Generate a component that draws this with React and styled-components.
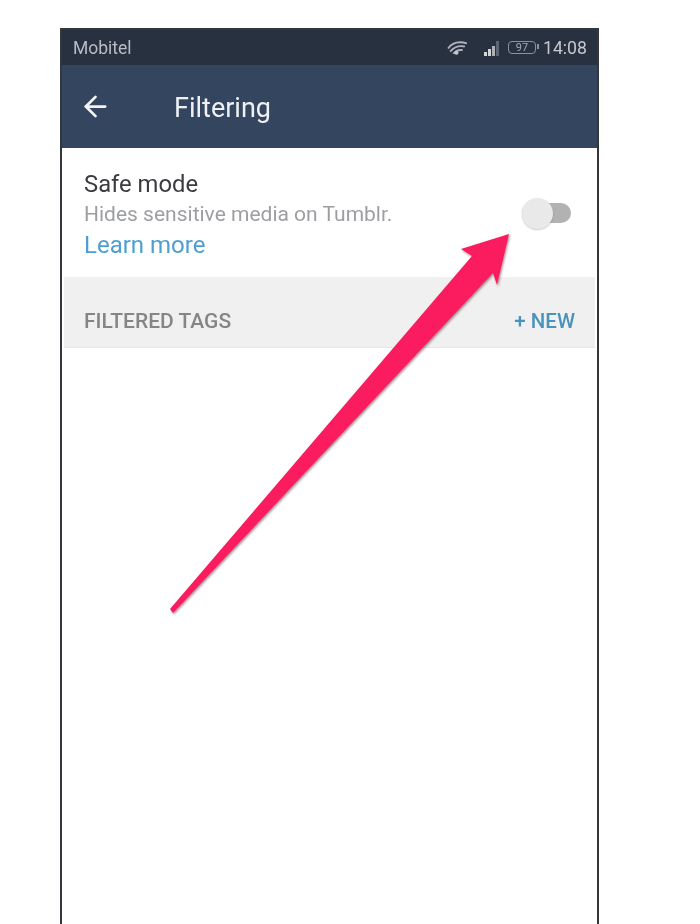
import React from 'react'
import styled, { createGlobalStyle } from 'styled-components'
import { ArrowLeft } from 'lucide-react'

const GlobalStyle = createGlobalStyle`
  html, body {
    margin: 0;
    padding: 0;
    background: #fff;
    font-family: Roboto, "Liberation Sans", sans-serif;
  }
`

function WifiIcon() {
  return (
    <svg width="21" height="15" viewBox="0 0 20 14" fill="none" stroke="#aeb3ba" strokeWidth="1.8">
      <path d="M1 8 C5 2 12 1 19 3" />
      <path d="M3 11 C7 6 12 5 17 6" />
      <path d="M6 13 C9 9 12 9 15 9.5" />
      <circle cx="9" cy="12" r="2" fill="#c4c8cc" stroke="none" />
    </svg>
  )
}

function SignalIcon() {
  return (
    <SignalSvg width="19" height="16" viewBox="0 0 17 16">
      <path d="M1 12h3v4H1zM5 9h3v7H5z" fill="#d4d6d9" />
      <path d="M9 6h3v10H9z" fill="#aeb2b7" />
      <path d="M13 1h3v15h-3z" fill="#5b6574" />
    </SignalSvg>
  )
}

function Battery() {
  return (
    <BatteryBody>
      <span>97</span>
    </BatteryBody>
  )
}

function PinkArrow() {
  return (
    <ArrowSvg width="360" height="400" viewBox="160 225 360 400">
      <defs>
        <filter id="arrowShadow" x="-5%" y="-5%" width="110%" height="110%">
          <feDropShadow dx="1" dy="1.5" stdDeviation="1.2" floodColor="#5a3040" floodOpacity="0.55" />
        </filter>
      </defs>
      <path
        d="M509 234 L461 249 L472 256 L170 609 L173 613 L493 273 L497 285 Z"
        fill="#fa1a5e"
        filter="url(#arrowShadow)"
      />
    </ArrowSvg>
  )
}

export default function App() {
  return (
    <Page>
      <GlobalStyle />
      <Phone>
        <StatusBar>
          <Carrier>Mobitel</Carrier>
          <StatusIcons>
            <WifiIcon />
            <SignalIcon />
            <Battery />
            <Clock>14:08</Clock>
          </StatusIcons>
        </StatusBar>
        <AppBar>
          <BackIcon size={33} strokeWidth={2} color="#f2f4f6" />
          <Title>Filtering</Title>
        </AppBar>
        <SafeRow>
          <SafeText>
            <SafeTitle>Safe mode</SafeTitle>
            <SafeHint>Hides sensitive media on Tumblr.</SafeHint>
            <LearnMore>Learn more</LearnMore>
          </SafeText>
          <Toggle>
            <Knob />
          </Toggle>
        </SafeRow>
        <TagsBar>
          <TagsLabel>FILTERED TAGS</TagsLabel>
          <NewButton>+ NEW</NewButton>
        </TagsBar>
        <PinkArrow />
      </Phone>
    </Page>
  )
}

const Page = styled.div`
  width: 700px;
  height: 924px;
  padding: 28px 0 0 60px;
  box-sizing: border-box;
  overflow: hidden;
  background: #fff;
`

const Phone = styled.div`
  position: relative;
  width: 539px;
  height: 896px;
  box-sizing: border-box;
  border: solid #33363b;
  border-width: 2px 2px 0 2px;
  background: #fff;
  filter: blur(0.45px);
`

const StatusBar = styled.div`
  display: flex;
  align-items: center;
  justify-content: space-between;
  height: 35px;
  padding: 0 10px 0 11px;
  background: #27313f;
`

const Carrier = styled.span`
  font-size: 17.5px;
  color: #b9bdc3;
`

const StatusIcons = styled.div`
  display: flex;
  align-items: center;
`

const SignalSvg = styled.svg`
  margin-left: 14px;
`

const BatteryBody = styled.div`
  position: relative;
  display: flex;
  align-items: center;
  justify-content: center;
  width: 26px;
  height: 11px;
  margin: 0 7px 0 7px;
  border: 1.5px solid #8b929c;
  border-radius: 4px;
  font-size: 11px;
  color: #a3a9b0;

  &::after {
    content: "";
    position: absolute;
    right: -4px;
    top: 2px;
    width: 2px;
    height: 5px;
    background: #8b929c;
  }
`

const Clock = styled.span`
  font-size: 17.7px;
  color: #c6c9ce;
`

const AppBar = styled.div`
  display: flex;
  align-items: center;
  height: 83px;
  padding: 0 0 0 17px;
  background: #34465f;
`

const BackIcon = styled(ArrowLeft)`
  flex: none;
`

const Title = styled.h1`
  margin: 3px 0 0 62px;
  font-size: 27px;
  font-weight: 400;
  color: #eef0f3;
`

const SafeRow = styled.div`
  display: flex;
  align-items: flex-start;
  justify-content: space-between;
  height: 129px;
  box-sizing: border-box;
  padding: 21px 26px 0 22px;
`

const SafeText = styled.div`
  display: flex;
  flex-direction: column;
`

const SafeTitle = styled.div`
  font-size: 23.8px;
  line-height: 30px;
  color: #3a3c3f;
`

const SafeHint = styled.div`
  font-size: 21px;
  line-height: 31px;
  color: #9c9ea1;
`

const LearnMore = styled.a`
  font-size: 24px;
  line-height: 31px;
  color: #4d9fd2;
`

const Toggle = styled.div`
  position: relative;
  width: 49px;
  height: 20px;
  margin-top: 34px;
  border-radius: 10px;
  background: #b2b2b2;
`

const Knob = styled.div`
  position: absolute;
  left: 0;
  top: -5px;
  width: 31px;
  height: 31px;
  border-radius: 50%;
  background: #e9e9e9;
  box-shadow: 0 1px 2px rgba(0, 0, 0, 0.2);
`

const TagsBar = styled.div`
  display: flex;
  align-items: center;
  justify-content: space-between;
  height: 71px;
  margin: 0 2px;
  padding: 17px 20px 0;
  box-sizing: border-box;
  background: #f0f0f0;
  border-bottom: 1px solid #e6e6e6;
`

const TagsLabel = styled.span`
  font-size: 21px;
  font-weight: 500;
  color: #858585;
`

const NewButton = styled.span`
  font-size: 20.5px;
  font-weight: 500;
  color: #4a93bd;
`

const ArrowSvg = styled.svg`
  position: absolute;
  left: 98px;
  top: 195px;
  overflow: visible;
`
